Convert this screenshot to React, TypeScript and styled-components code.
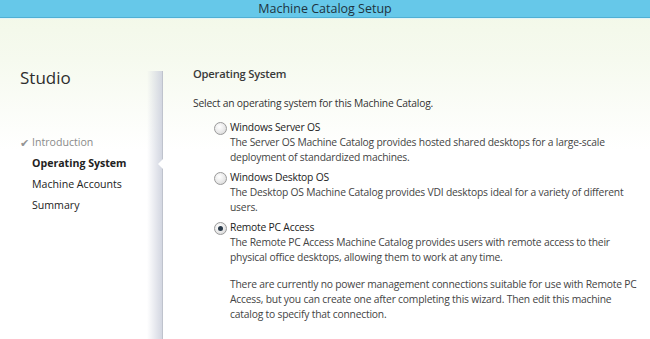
import styled, { createGlobalStyle } from 'styled-components';

const GlobalStyle = createGlobalStyle`
  html, body {
    margin: 0;
    padding: 0;
  }
  body {
    width: 650px;
    height: 339px;
    overflow: hidden;
    font-family: 'Open Sans', 'Noto Sans', sans-serif;
    color: #333;
  }
`;

const Window = styled.div`
  display: flex;
  flex-direction: column;
  width: 650px;
  height: 339px;
  background: linear-gradient(180deg, #f2f8e7 0px, #f6faef 60px, #ffffff 150px);
`;

const TitleBar = styled.div`
  height: 17px;
  background: #66c8e9;
  border-bottom: 1px solid #4fb0d4;
  box-shadow: 0 1px 0 #e3f4f6;
  display: flex;
  align-items: center;
  justify-content: center;
  font-size: 12.5px;
  color: #1e3340;
  line-height: 17px;
`;

const Body = styled.div`
  flex: 1;
  display: flex;
`;

const Sidebar = styled.div`
  width: 163px;
  position: relative;
  padding: 48px 0 0 20px;
  box-sizing: border-box;

  &::after {
    content: '';
    position: absolute;
    top: 53px;
    right: 0;
    bottom: 0;
    width: 16px;
    background: linear-gradient(90deg, rgba(214, 218, 228, 0) 0%, rgba(206, 210, 222, 0.9) 100%);
    border-right: 1px solid #bfc3cd;
    box-sizing: border-box;
  }
`;

const Brand = styled.div`
  font-size: 17px;
  color: #2d2d2d;
  margin-bottom: 43px;
`;

const Steps = styled.ul`
  list-style: none;
  margin: 0;
  padding: 0;
`;

const Step = styled.li<{ $state: 'done' | 'current' | 'todo' }>`
  position: relative;
  height: 21px;
  line-height: 21px;
  font-size: 10.6px;
  padding-left: 12px;
  color: ${(p) => (p.$state === 'done' ? '#8a8a8a' : '#222')};
  font-weight: ${(p) => (p.$state === 'current' ? 700 : 400)};

  ${(p) =>
    p.$state === 'current' &&
    `
    &::after {
      content: '';
      position: absolute;
      right: 0;
      top: 6px;
      width: 0;
      height: 0;
      border-top: 5px solid transparent;
      border-bottom: 5px solid transparent;
      border-right: 5px solid #ffffff;
      z-index: 2;
    }
  `}
`;

const Check = styled.span`
  position: absolute;
  left: 0;
  top: 0;
  color: #949494;
  font-size: 11px;
`;

const Main = styled.div`
  flex: 1;
  padding: 48px 0 0 30px;
  font-size: 10.3px;
  letter-spacing: -0.2px;
  line-height: 15px;
  color: #333;
`;

const Heading = styled.div`
  font-size: 11.2px;
  font-weight: 600;
  color: #3a3a3a;
  margin-bottom: 15px;
`;

const Intro = styled.div`
  margin-bottom: 9px;
`;

const Options = styled.div`
  display: flex;
  flex-direction: column;
  gap: 5px;
  padding-left: 21px;
`;

const Option = styled.div`
  display: flex;
  gap: 3px;
`;

const Radio = styled.span<{ $checked?: boolean }>`
  width: 11px;
  height: 11px;
  margin-top: 2px;
  border-radius: 50%;
  border: 1px solid #9a9a9a;
  background: radial-gradient(circle at 40% 35%, #ffffff 0%, #e6e6e6 60%, #cfcfcf 100%);
  display: flex;
  align-items: center;
  justify-content: center;
  flex-shrink: 0;

  &::after {
    content: '';
    display: ${(p) => (p.$checked ? 'block' : 'none')};
    width: 5px;
    height: 5px;
    border-radius: 50%;
    background: #2a3a4a;
  }
`;

const OptionText = styled.div`
  width: 412px;
`;

const Label = styled.div`
  color: #222;
`;

const Note = styled.p`
  margin: 0;
  color: #444;
`;

const Spaced = styled(Note)`
  margin-top: 12px;
`;

export default function App() {
  return (
    <Window>
      <GlobalStyle />
      <TitleBar>Machine Catalog Setup</TitleBar>
      <Body>
        <Sidebar>
          <Brand>Studio</Brand>
          <Steps>
            <Step $state="done">
              <Check>✔</Check>Introduction
            </Step>
            <Step $state="current">Operating System</Step>
            <Step $state="todo">Machine Accounts</Step>
            <Step $state="todo">Summary</Step>
          </Steps>
        </Sidebar>
        <Main>
          <Heading>Operating System</Heading>
          <Intro>Select an operating system for this Machine Catalog.</Intro>
          <Options>
            <Option>
              <Radio />
              <OptionText>
                <Label>Windows Server OS</Label>
                <Note>
                  The Server OS Machine Catalog provides hosted shared desktops for a large-scale deployment of
                  standardized machines.
                </Note>
              </OptionText>
            </Option>
            <Option>
              <Radio />
              <OptionText>
                <Label>Windows Desktop OS</Label>
                <Note>The Desktop OS Machine Catalog provides VDI desktops ideal for a variety of different users.</Note>
              </OptionText>
            </Option>
            <Option>
              <Radio $checked />
              <OptionText>
                <Label>Remote PC Access</Label>
                <Note>
                  The Remote PC Access Machine Catalog provides users with remote access to their physical office
                  desktops, allowing them to work at any time.
                </Note>
                <Spaced>
                  There are currently no power management connections suitable for use with Remote PC Access, but you
                  can create one after completing this wizard. Then edit this machine catalog to specify that
                  connection.
                </Spaced>
              </OptionText>
            </Option>
          </Options>
        </Main>
      </Body>
    </Window>
  );
}
